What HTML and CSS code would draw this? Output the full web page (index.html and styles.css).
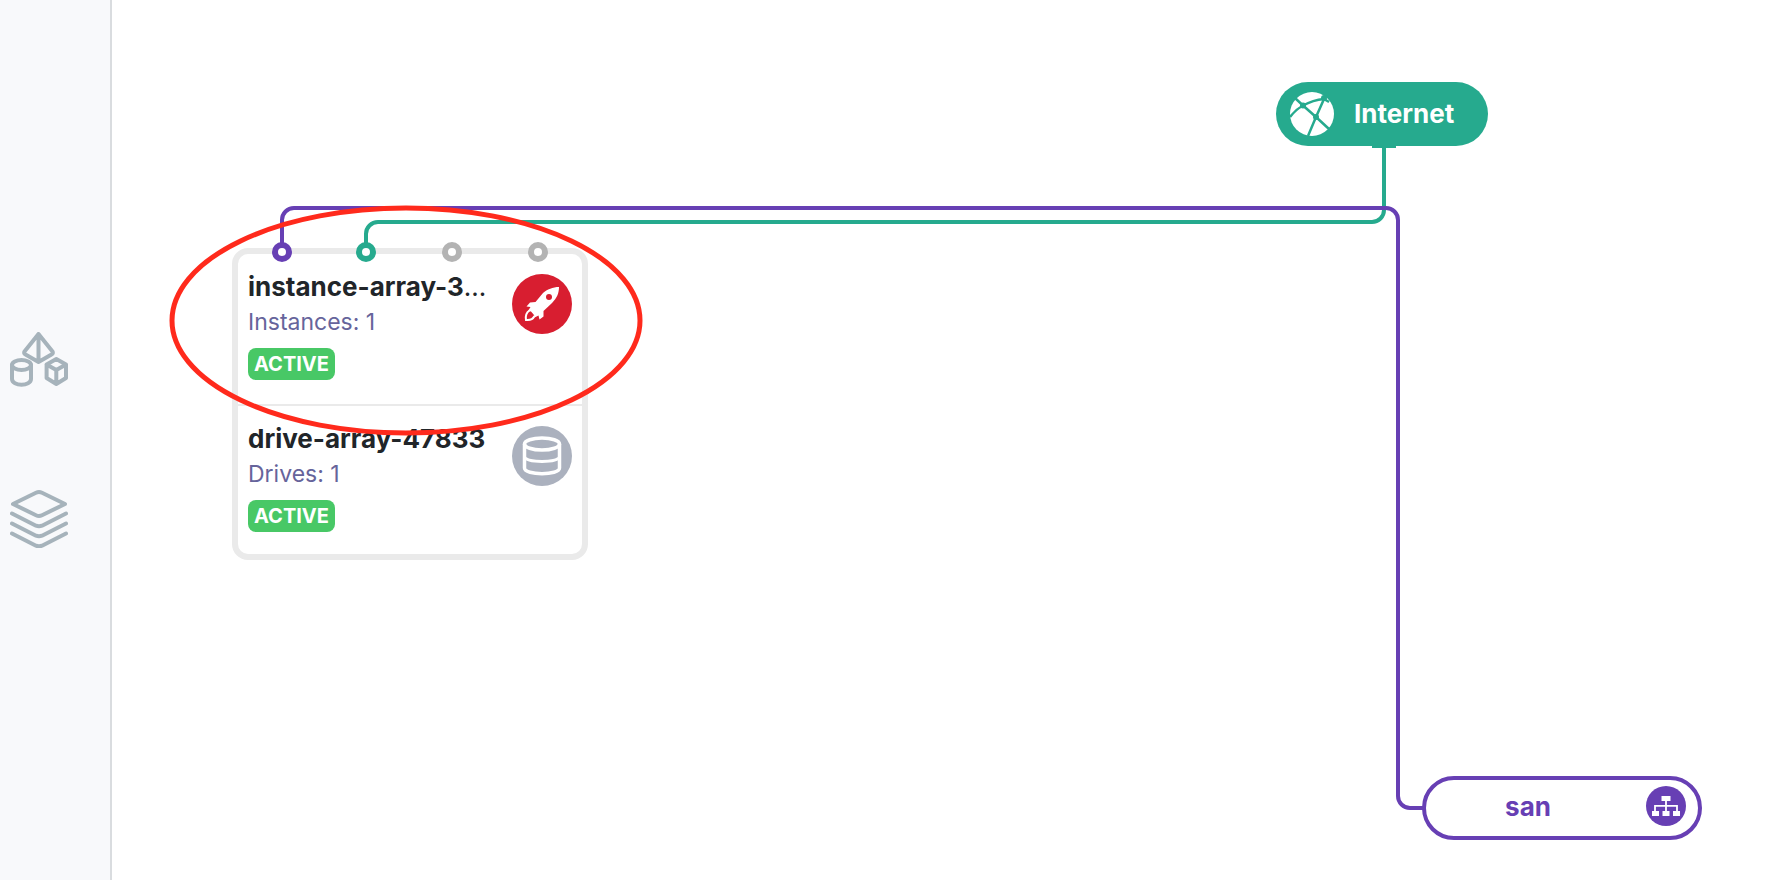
FILE: index.html
```html
<!DOCTYPE html>
<html lang="en">
<head>
    <meta charset="UTF-8">
    <meta name="viewport" content="width=device-width, initial-scale=1.0">
    <title>Infrastructure</title>
    <link rel="stylesheet" href="styles.css">
</head>
<body>
    <nav class="sidebar">
        <a class="sidebar-link" href="#resources" aria-label="Resources">
            <svg class="sidebar-icon" viewBox="0 0 58 58">
                <path d="M28.500 2 L42.500 19.500 Q43.500 21.500 41.500 22.500 L28.500 30 L15.500 22.500 Q13.500 21.500 14.500 19.500 Z M28.500 2 V30"/>
                <ellipse cx="11.500" cy="33" rx="9.500" ry="5"/>
                <path d="M2 33 V47 C2 54.500 21 54.500 21 47 V33"/>
                <path d="M46.300 27 L56 32.500 V46 L46.300 52 L36.600 46 V32.500 Z M36.600 32.500 L46.300 38 L56 32.500 M46.300 38 V52"/>
            </svg>
        </a>
        <a class="sidebar-link" href="#layers" aria-label="Layers">
            <svg class="sidebar-icon" viewBox="0 0 58 58">
                <path d="M3 14 L26 2.800 Q29 1.400 32 2.800 L55 14 L32 25.200 Q29 26.600 26 25.200 Z"/>
                <path d="M2 23.500 L26 35.700 Q29 37 32 35.700 L56 23.500"/>
                <path d="M2 33.500 L26 45.700 Q29 47 32 45.700 L56 33.500"/>
                <path d="M2 43.500 L26 55.700 Q29 57 32 55.700 L56 43.500"/>
            </svg>
        </a>
    </nav>

    <main class="canvas">
        <a class="node network internet" href="#internet">
            <svg class="globe" viewBox="0 0 44 44">
                <circle class="globe-fill" cx="22" cy="22" r="22"/>
                <g class="globe-lines">
                    <path d="M5 6 L13 13.500 L26 25 L39 37"/>
                    <path d="M0 25 Q5 18 13 13.500 Q23 8 34 7"/>
                    <path d="M34 7 L26 25 L18 44"/>
                    <path d="M34 7 L39 10"/>
                </g>
                <circle class="globe-dot" cx="13" cy="13.500" r="3"/>
                <circle class="globe-dot" cx="26" cy="25" r="3"/>
                <circle class="globe-dot" cx="34" cy="6" r="3"/>
            </svg>
            <span class="internet-label">Internet</span>
        </a>

        <section class="node card">
            <div class="item">
                <div class="item-info">
                    <h2 class="item-name"><strong>instance-array-3</strong>...</h2>
                    <div class="item-count">Instances: 1</div>
                    <span class="badge">ACTIVE</span>
                </div>
                <svg class="item-icon" viewBox="0 0 60 60">
                    <circle cx="30" cy="30" r="30" fill="#d81e30"/>
                    <path fill="#fff" d="M47 13 C41 13 35 15.500 31 19 L23.500 28 L18 28.500 L14.500 32.500 L18.500 33 L16 37 L19 37.500 L22 41 L22.500 43.500 L26.500 41.500 L27.500 45.500 L31.500 42.500 L31.500 37 L40 29 C45 24 47 19 47 13 Z"/>
                    <circle cx="37" cy="23" r="3" fill="#d81e30"/>
                    <path d="M17.500 36.500 C13.500 39 13.500 43 14 46 C18 46.500 21 45 22.500 42" fill="none" stroke="#fff" stroke-width="2"/>
                </svg>
            </div>
            <div class="item">
                <div class="item-info">
                    <h2 class="item-name"><strong>drive-array-47833</strong></h2>
                    <div class="item-count">Drives: 1</div>
                    <span class="badge">ACTIVE</span>
                </div>
                <svg class="item-icon" viewBox="0 0 60 60">
                    <circle cx="30" cy="30" r="30" fill="#abb1be"/>
                    <g fill="none" stroke="#fff" stroke-width="3.500">
                        <ellipse cx="30" cy="18" rx="17.500" ry="6"/>
                        <path d="M12.500 18 V42 C12.500 49.500 47.500 49.500 47.500 42 V18"/>
                        <path d="M12.500 31 C15 37 45 37 47.500 31" stroke-width="3"/>
                    </g>
                </svg>
            </div>
        </section>

        <a class="node network san" href="#san">
            <span class="san-label">san</span>
            <svg class="san-icon" viewBox="0 0 40 40">
                <circle cx="20" cy="20" r="20" fill="#673fb4"/>
                <g fill="#fff">
                    <rect x="15.500" y="10" width="9" height="5"/>
                    <rect x="6" y="25" width="7" height="5"/>
                    <rect x="16.500" y="25" width="7" height="5"/>
                    <rect x="27" y="25" width="7" height="5"/>
                </g>
                <path d="M20 15 V25 M9 25 V19.800 H31 V25" fill="none" stroke="#fff" stroke-width="1.800"/>
            </svg>
        </a>

        <!-- links between the nodes, with the card's ports -->
        <svg class="wires">
            <path class="wire green" d="M1272 146 V210 A12 12 0 0 1 1260 222 H266 A12 12 0 0 0 254 234 V244"/>
            <rect x="1260" y="146" width="24" height="2" fill="#26aa8e"/>
            <path class="wire purple" d="M170 244 V220 A12 12 0 0 1 182 208 H1274 A12 12 0 0 1 1286 220 V796 A12 12 0 0 0 1298 808 H1312"/>
            <circle class="port purple" cx="170" cy="252" r="7"/>
            <circle class="port green" cx="254" cy="252" r="7"/>
            <circle class="port" cx="340" cy="252" r="7"/>
            <circle class="port" cx="426" cy="252" r="7"/>
            <ellipse class="marker" cx="294" cy="320.500" rx="234" ry="112.500"/>
        </svg>
    </main>
</body>
</html>
```

FILE: styles.css
```css
body {
    display: flex;
    min-height: 100vh;
    margin: 0;
    background-color: #fff;
    color: #212529;
    font-family: Inter, "Liberation Sans", sans-serif;
}
a {
    text-decoration: none;
}
svg {
    display: block;
}
.sidebar {
    box-sizing: border-box;
    flex: none;
    display: flex;
    flex-direction: column;
    justify-content: center;
    gap: 100px;
    width: 112px;
    padding-left: 10px;
    border-right: 2px solid #d9dcdf;
    background-color: #f8f9fb;
}
.sidebar-link {
    width: 58px;
}
.sidebar-icon {
    width: 58px;
    height: 58px;
    fill: none;
    stroke: #a6b3bb;
    stroke-width: 4;
    stroke-linecap: round;
    stroke-linejoin: round;
}
.canvas {
    position: relative;
    flex: 1;
    overflow: hidden;
}
.node {
    position: absolute;
    box-sizing: border-box;
}
.network {
    display: flex;
    align-items: center;
    height: 64px;
    border-radius: 32px;
    font-size: 26px;
    font-weight: 700;
}
.internet {
    left: 1164px;
    top: 82px;
    width: 212px;
    gap: 20px;
    padding-left: 14px;
    background-color: #26aa8e;
    color: #fff;
}
.internet-label {
    padding-bottom: 2px;
}
.globe {
    width: 44px;
    height: 44px;
}
.globe-fill {
    fill: #fff;
}
.globe-lines {
    fill: none;
    stroke: #26aa8e;
    stroke-width: 2.5;
}
.globe-dot {
    fill: #26aa8e;
}
.san {
    left: 1310px;
    top: 776px;
    width: 280px;
    padding: 0 12px 4px 0;
    border: 4px solid #673fb4;
    background-color: #fff;
    color: #673fb4;
}
.san-label {
    flex: 1;
    padding-right: 16px;
    text-align: center;
}
.san-icon {
    width: 40px;
    height: 40px;
}
.card {
    left: 120px;
    top: 248px;
    width: 356px;
    border: 6px solid #eaeaea;
    border-radius: 16px;
    background-color: #fff;
}
.item {
    box-sizing: border-box;
    display: flex;
    justify-content: space-between;
    height: 150px;
    padding: 16px 10px 0;
}
.item + .item {
    border-top: 2px solid #eaeaea;
}
.item-name {
    margin: 0;
    font-size: 26px;
    font-weight: 400;
    line-height: 34px;
}
.item-name strong {
    font-weight: 700;
}
.item-count {
    color: #66649b;
    font-size: 23px;
    line-height: 36px;
}
.badge {
    display: inline-block;
    margin-top: 8px;
    padding: 1px 6px 0;
    border-radius: 8px;
    background-color: #48c866;
    color: #fff;
    font-size: 20px;
    font-weight: 700;
    line-height: 31px;
}
.item-icon {
    flex: none;
    width: 60px;
    height: 60px;
    margin-top: 4px;
}
.wires {
    position: absolute;
    top: 0;
    left: 0;
    width: 100%;
    height: 100%;
    pointer-events: none;
}
.wire {
    fill: none;
    stroke-width: 4;
}
.port {
    fill: #fff;
    stroke: #b3b3b3;
    stroke-width: 6;
}
.green {
    stroke: #26aa8e;
}
.purple {
    stroke: #673fb4;
}
.marker {
    fill: none;
    stroke: #ff2a1c;
    stroke-width: 5;
}
```
